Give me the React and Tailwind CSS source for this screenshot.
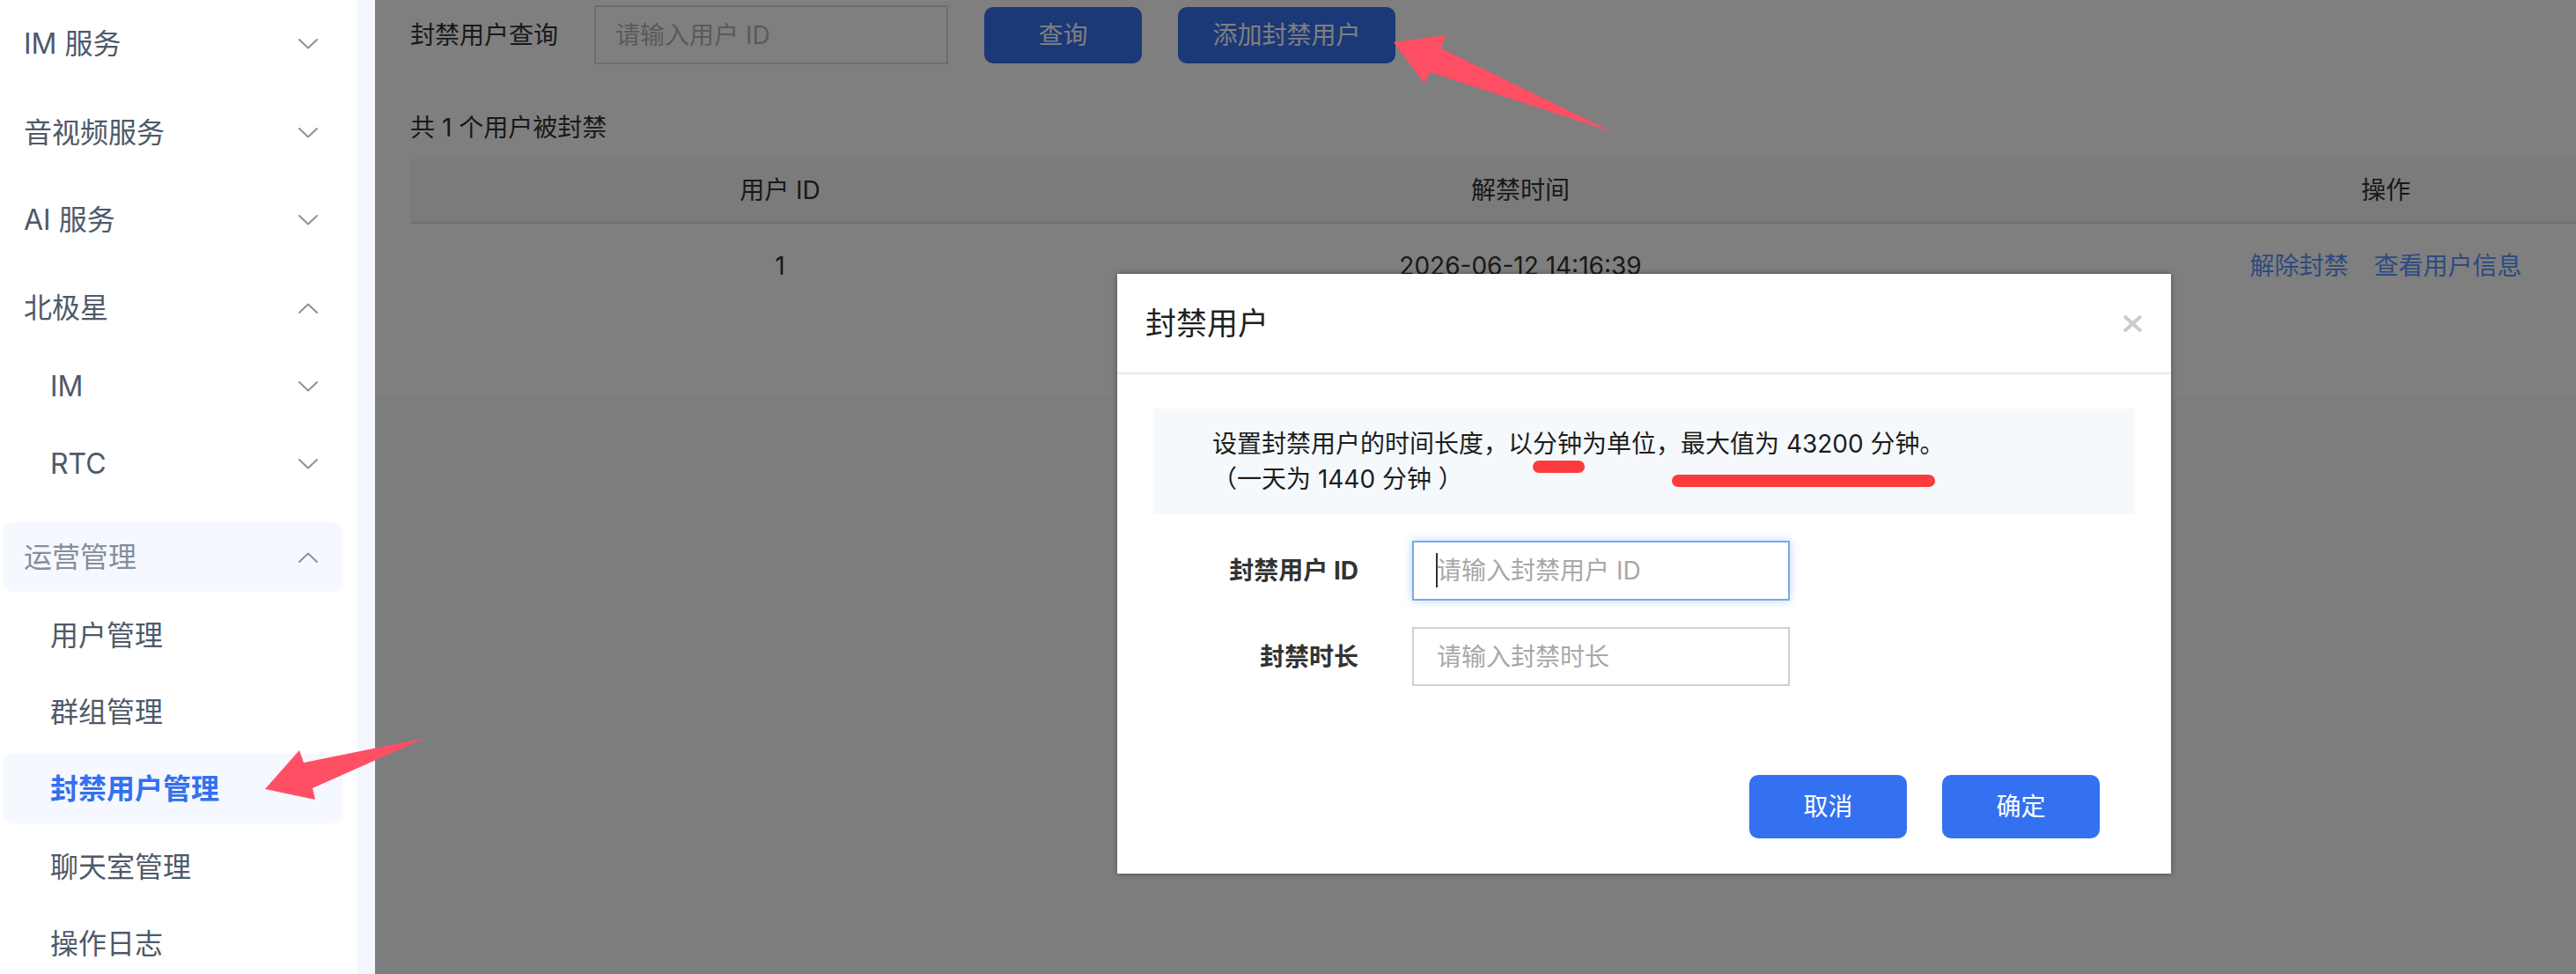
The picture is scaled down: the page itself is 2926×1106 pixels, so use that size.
import React from "react";

const FONT = { fontFamily: '"Inter", "Noto Sans CJK SC", "Noto Sans", sans-serif' };

function Chevron({ up = false }) {
  return (
    <svg width="22" height="12" viewBox="0 0 22 12" className="shrink-0">
      <polyline
        points={up ? "1,11 11,1.5 21,11" : "1,1 11,10.5 21,1"}
        fill="none"
        stroke="#8a929d"
        strokeWidth="2"
        strokeLinecap="round"
        strokeLinejoin="round"
      />
    </svg>
  );
}

function MenuItem({ label, level = 0, chevron, up, active, open, className = "" }) {
  const pad = level === 0 ? "pl-[24px]" : "pl-[54px]";
  const bg = active || open ? "bg-[#f5f8ff]" : "";
  const color = active
    ? "text-[#3370f0] font-semibold"
    : open
    ? "text-[#868e99]"
    : "text-[#4e5969]";
  return (
    <div
      className={`h-[79px] shrink-0 flex items-center justify-between rounded-[12px] pr-[28px] ${pad} ${bg} ${className}`}
    >
      <span className={`text-[32px] leading-none ${color}`}>{label}</span>
      {chevron && <Chevron up={up} />}
    </div>
  );
}

function Sidebar() {
  return (
    <div className="w-[406px] shrink-0 bg-white pl-[3px] pr-[17px] pt-[10px] flex flex-col">
      <MenuItem label="IM 服务" chevron />
      <MenuItem label="音视频服务" chevron className="mt-[22px]" />
      <MenuItem label="AI 服务" chevron className="mt-[20px]" />
      <MenuItem label="北极星" chevron up className="mt-[21px]" />
      <MenuItem label="IM" level={1} chevron className="mt-[10px]" />
      <MenuItem label="RTC" level={1} chevron className="mt-[9px]" />
      <MenuItem label="运营管理" chevron up open className="mt-[27px]" />
      <MenuItem label="用户管理" level={1} className="mt-[10px]" />
      <MenuItem label="群组管理" level={1} className="mt-[8px]" />
      <MenuItem label="封禁用户管理" level={1} active className="mt-[8px]" />
      <MenuItem label="聊天室管理" level={1} className="mt-[10px]" />
      <MenuItem label="操作日志" level={1} className="mt-[8px]" />
    </div>
  );
}

function BanListCard() {
  return (
    <div className="h-[450px] bg-white pl-[40px] pt-[6px] text-[#333333]">
      {/* search bar */}
      <div className="flex items-center h-[67px]">
        <span className="text-[28px] leading-none">封禁用户查询</span>
        <input
          readOnly
          placeholder="请输入用户 ID"
          className="ml-[41px] w-[402px] h-[67px] border-2 border-[#dcdcdc] px-[22px] text-[28px] outline-none placeholder:text-[#b4b4b4] bg-white"
        />
        <button className="ml-[41px] w-[179px] h-[64px] rounded-[10px] bg-[#3670ee] text-white text-[28px]">
          查询
        </button>
        <button className="ml-[41px] w-[247px] h-[64px] rounded-[10px] bg-[#3670ee] text-white text-[28px]">
          添加封禁用户
        </button>
      </div>

      <div className="mt-[52px] text-[28px] leading-[40px]">共 1 个用户被封禁</div>

      {/* table */}
      <div className="mt-[15px]">
        <div className="flex h-[74px] bg-[#f6f6f6] border-b-2 border-[#e0e0e0] items-center text-[28px]">
          <div className="w-[840px] text-center">用户 ID</div>
          <div className="w-[842px] text-center">解禁时间</div>
          <div className="flex-1 pl-[346px] text-center">操作</div>
        </div>
        <div className="flex h-[96px] items-center text-[28px]">
          <div className="w-[840px] text-center">1</div>
          <div className="w-[842px] text-center">2026-06-12 14:16:39</div>
          <div className="flex-1 pl-[346px] flex justify-center gap-[29px] text-[#5a96ff]">
            <span>解除封禁</span>
            <span>查看用户信息</span>
          </div>
        </div>
      </div>
    </div>
  );
}

function BanDialog() {
  return (
    <div className="absolute left-[843px] top-[311px] w-[1197px] h-[681px] bg-white shadow-[0_0_6px_rgba(0,0,0,0.4)] flex flex-col">
      <div className="h-[114px] shrink-0 flex items-center justify-between px-[32px] border-b-2 border-[#e8e8e8]">
        <span className="text-[35px] leading-none text-[#1f1f1f]">封禁用户</span>
        <svg width="23" height="21" viewBox="0 0 23 21">
          <path d="M2 2 L21 19 M21 2 L2 19" stroke="#cbcbcb" strokeWidth="4" />
        </svg>
      </div>

      <div className="px-[41px] pt-[39px] flex flex-col flex-1">
        {/* notice */}
        <div className="relative h-[120px] bg-[#f5f9fc] pl-[67px] py-[20px] text-[28px] leading-[40px] text-[#1d1d1d]">
          <div>设置封禁用户的时间长度，以分钟为单位，最大值为 43200 分钟。</div>
          <div>（一天为 1440 分钟 ）</div>
          <span className="absolute left-[431px] top-[59px] w-[59px] h-[14px] rounded-full bg-[#fc3c3c]" />
          <span className="absolute left-[589px] top-[75px] w-[299px] h-[14px] rounded-full bg-[#fc3c3c]" />
        </div>

        {/* form */}
        <div className="mt-[30px] flex items-center">
          <label className="w-[233px] text-right text-[28px] font-bold text-[#333333]">封禁用户 ID</label>
          <div className="relative ml-[61px]">
            <input
              readOnly
              placeholder="请输入封禁用户 ID"
              className="w-[429px] h-[68px] border-2 border-[#78aae6] shadow-[0_0_10px_rgba(60,130,230,0.35)] pl-[26px] text-[28px] outline-none placeholder:text-[#a8a8a8] bg-white"
            />
            <span className="absolute left-[27px] top-[14px] w-[1.5px] h-[39px] bg-[#333333]" />
          </div>
        </div>
        <div className="mt-[30px] flex items-center">
          <label className="w-[233px] text-right text-[28px] font-bold text-[#333333]">封禁时长</label>
          <input
            readOnly
            placeholder="请输入封禁时长"
            className="ml-[61px] w-[429px] h-[67px] border-2 border-[#d0d0d0] pl-[26px] text-[28px] outline-none placeholder:text-[#a8a8a8] bg-white"
          />
        </div>

        <div className="mt-[101px] flex justify-end gap-[40px] pr-[40px]">
          <button className="w-[179px] h-[72px] rounded-[10px] bg-[#3471f0] text-white text-[28px]">取消</button>
          <button className="w-[179px] h-[72px] rounded-[10px] bg-[#3471f0] text-white text-[28px]">确定</button>
        </div>
      </div>
    </div>
  );
}

function Annotations() {
  return (
    <svg
      className="absolute inset-0 pointer-events-none"
      width="2926"
      height="1106"
      viewBox="0 0 2926 1106"
    >
      <polygon
        points="1583,48 1642,40 1637,55 1832,150 1624,82 1618,95"
        fill="#ff4f64"
      />
      <polygon
        points="483,838 345,866 340,852 301,896 358,908 355,895"
        fill="#ff4f64"
      />
    </svg>
  );
}

export default function App() {
  return (
    <div className="relative w-[2926px] h-[1106px] flex overflow-hidden bg-white" style={FONT}>
      <Sidebar />
      <div className="w-[20px] shrink-0 bg-[#f3f6fd]" />
      <div className="relative flex-1 bg-[#f9fbff]">
        <BanListCard />
        <div className="absolute inset-0 bg-black/50" />
        <BanDialog />
      </div>
      <Annotations />
    </div>
  );
}
